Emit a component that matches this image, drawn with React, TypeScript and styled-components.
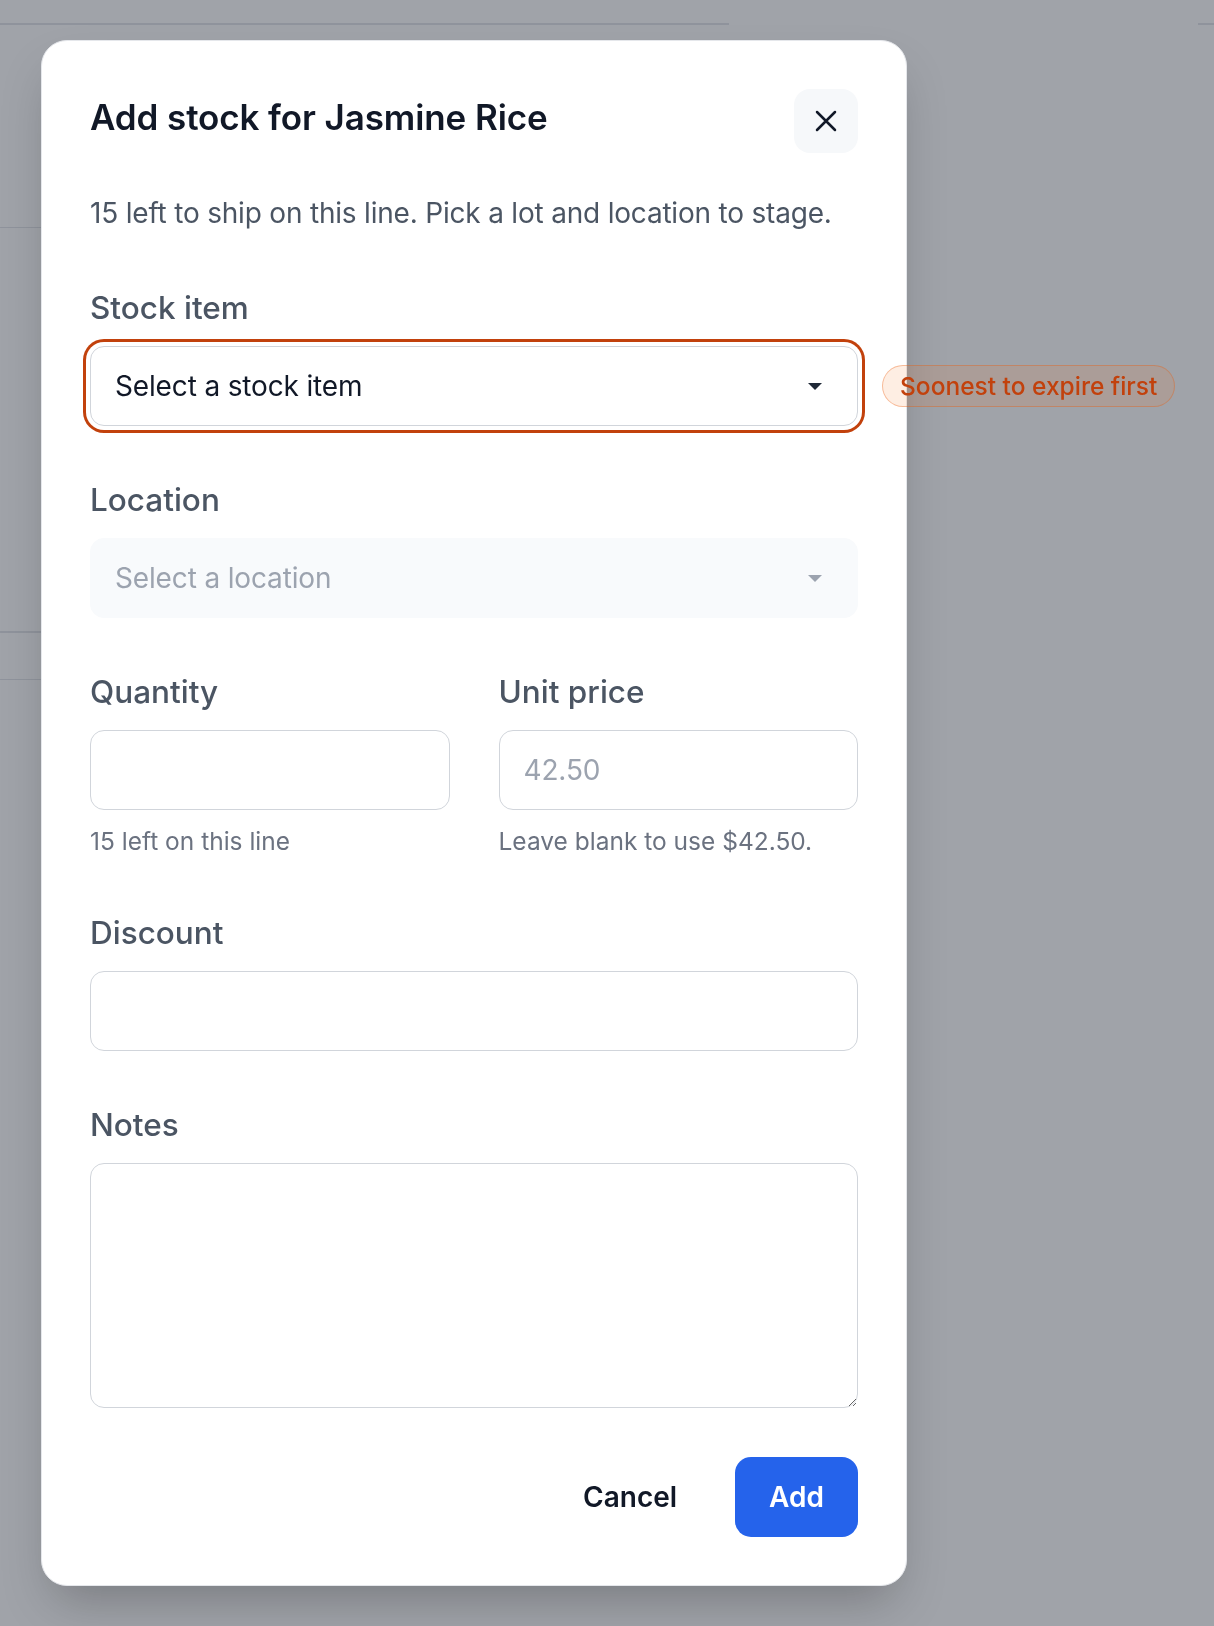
import React from "react";
import styled, { createGlobalStyle } from "styled-components";

const GlobalStyle = createGlobalStyle`
  *, *::before, *::after { box-sizing: border-box; }
  html, body { margin: 0; padding: 0; }
  body {
    font-family: Inter, "Noto Sans", "Liberation Sans", sans-serif;
    background: #ffffff;
    color: #111827;
    -webkit-font-smoothing: antialiased;
  }
`;

/* ---------- page behind the dialog ---------- */

const PageBehind = styled.div`
  min-height: 1626px;
  padding-top: 23px;
  display: flex;
  flex-direction: column;
`;

const RuleRow = styled.div`
  display: flex;
  justify-content: space-between;
`;

const Rule = styled.div<{ $w: number; $t?: number; $mt?: number }>`
  width: ${(p) => p.$w}px;
  height: ${(p) => p.$t ?? 1}px;
  margin-top: ${(p) => p.$mt ?? 0}px;
  background: #e3e5e9;
`;

/* ---------- overlay + dialog ---------- */

const Overlay = styled.div`
  position: fixed;
  inset: 0;
  background: rgba(17, 24, 39, 0.4);
  padding: 40px 0 0 41px;
  display: flex;
  align-items: flex-start;
`;

const Dialog = styled.div`
  position: relative;
  width: 866px;
  background: #ffffff;
  border: 1px solid #e5e7eb;
  border-radius: 26px;
  padding: 48px;
  box-shadow: 0 25px 50px -12px rgba(0, 0, 0, 0.25);
  display: flex;
  flex-direction: column;
`;

const Header = styled.div`
  display: flex;
  justify-content: space-between;
  align-items: flex-start;
`;

const Title = styled.h2`
  margin: 0;
  font-size: 35px;
  line-height: 56px;
  font-weight: 600;
  color: #111827;
  letter-spacing: -0.1px;
`;

const CloseButton = styled.button`
  width: 64px;
  height: 64px;
  padding: 0;
  border: none;
  border-radius: 16px;
  background: #f6f8fa;
  display: flex;
  align-items: center;
  justify-content: center;
  cursor: pointer;
`;

const Subtitle = styled.p`
  margin: 39px 0 0;
  font-size: 28px;
  line-height: 42px;
  color: #4b5563;
  letter-spacing: -0.2px;
`;

const Form = styled.div`
  margin-top: 49px;
  display: flex;
  flex-direction: column;
  gap: 49px;
`;

const Field = styled.div`
  display: flex;
  flex-direction: column;
  min-width: 0;
`;

const Label = styled.label`
  font-size: 31.5px;
  line-height: 49px;
  font-weight: 500;
  color: #4b5563;
  margin-bottom: 14px;
`;

const TwoColumns = styled.div`
  display: grid;
  grid-template-columns: 1fr 1fr;
  gap: 49px;
`;

const SelectWrap = styled.div`
  position: relative;
`;

const SelectBox = styled.button<{ $disabled?: boolean; $highlight?: boolean }>`
  width: 100%;
  height: 80px;
  padding: 0 24px;
  display: flex;
  align-items: center;
  justify-content: space-between;
  font-family: inherit;
  font-size: 28px;
  line-height: 42px;
  letter-spacing: -0.15px;
  text-align: left;
  border-radius: 14px;
  border: 1px solid ${(p) => (p.$disabled ? "#f8fafc" : "#d1d5db")};
  background: ${(p) => (p.$disabled ? "#f8fafc" : "#ffffff")};
  color: ${(p) => (p.$disabled ? "#9ca3af" : "#111827")};
  box-shadow: ${(p) =>
    p.$highlight ? "0 0 0 4px #ffffff, 0 0 0 7px #c2410c" : "none"};
  cursor: ${(p) => (p.$disabled ? "default" : "pointer")};
`;

const Caret = styled.svg`
  flex: none;
  margin-right: 11px;
`;

const Badge = styled.span`
  position: absolute;
  left: calc(100% + 24px);
  top: 50%;
  transform: translateY(-50%);
  height: 42px;
  padding: 0 17px;
  display: inline-flex;
  align-items: center;
  white-space: nowrap;
  border-radius: 999px;
  border: 1px solid rgba(234, 88, 12, 0.35);
  background: rgba(249, 115, 22, 0.12);
  color: #c2410c;
  font-size: 24.5px;
  font-weight: 500;
`;

const TextInput = styled.input`
  width: 100%;
  height: 80px;
  padding: 0 24px;
  font-family: inherit;
  font-size: 28px;
  letter-spacing: -0.15px;
  color: #111827;
  border: 1px solid #d1d5db;
  border-radius: 14px;
  background: #ffffff;
  outline: none;
  &::placeholder {
    color: #9ca3af;
  }
`;

const TextArea = styled.textarea`
  width: 100%;
  height: 245px;
  padding: 17px 24px;
  font-family: inherit;
  font-size: 28px;
  line-height: 42px;
  color: #111827;
  border: 1px solid #d1d5db;
  border-radius: 14px;
  background: #ffffff;
  outline: none;
  resize: vertical;
`;

const Hint = styled.p`
  margin: 14px 0 0;
  font-size: 24.5px;
  line-height: 35px;
  color: #6b7280;
`;

const Footer = styled.div`
  margin-top: 49px;
  display: flex;
  justify-content: flex-end;
  gap: 24px;
`;

const Button = styled.button<{ $primary?: boolean }>`
  height: 80px;
  padding: 0 34px;
  border: none;
  border-radius: 16px;
  font-family: inherit;
  font-size: 28px;
  font-weight: 600;
  background: ${(p) => (p.$primary ? "#2563eb" : "transparent")};
  color: ${(p) => (p.$primary ? "#ffffff" : "#111827")};
  cursor: pointer;
`;

const CaretIcon = ({ color }: { color: string }) => (
  <Caret width="14" height="7" viewBox="0 0 14 7" aria-hidden="true">
    <path d="M0 0 L14 0 L7 7 Z" fill={color} />
  </Caret>
);

const XIcon = () => (
  <svg width="22" height="22" viewBox="0 0 22 22" aria-hidden="true">
    <path
      d="M2 2 L20 20 M20 2 L2 20"
      stroke="#111827"
      strokeWidth="2.5"
      strokeLinecap="round"
      fill="none"
    />
  </svg>
);

export default function App() {
  return (
    <>
      <GlobalStyle />
      <PageBehind>
        <RuleRow>
          <Rule $w={729} $t={2} />
          <Rule $w={16} $t={2} />
        </RuleRow>
        <Rule $w={700} $mt={202} />
        <Rule $w={700} $t={2} $mt={403} />
        <Rule $w={700} $mt={46} />
      </PageBehind>

      <Overlay>
        <Dialog role="dialog" aria-labelledby="dlg-title">
          <Header>
            <Title id="dlg-title">Add stock for Jasmine Rice</Title>
            <CloseButton aria-label="Close">
              <XIcon />
            </CloseButton>
          </Header>
          <Subtitle>
            15 left to ship on this line. Pick a lot and location to stage.
          </Subtitle>

          <Form>
            <Field>
              <Label>Stock item</Label>
              <SelectWrap>
                <SelectBox $highlight>
                  <span>Select a stock item</span>
                  <CaretIcon color="#1f2937" />
                </SelectBox>
                <Badge>Soonest to expire first</Badge>
              </SelectWrap>
            </Field>

            <Field>
              <Label>Location</Label>
              <SelectBox $disabled>
                <span>Select a location</span>
                <CaretIcon color="#9ca3af" />
              </SelectBox>
            </Field>

            <TwoColumns>
              <Field>
                <Label>Quantity</Label>
                <TextInput type="text" />
                <Hint>15 left on this line</Hint>
              </Field>
              <Field>
                <Label>Unit price</Label>
                <TextInput type="text" placeholder="42.50" />
                <Hint>Leave blank to use $42.50.</Hint>
              </Field>
            </TwoColumns>

            <Field>
              <Label>Discount</Label>
              <TextInput type="text" />
            </Field>

            <Field>
              <Label>Notes</Label>
              <TextArea />
            </Field>
          </Form>

          <Footer>
            <Button>Cancel</Button>
            <Button $primary>Add</Button>
          </Footer>
        </Dialog>
      </Overlay>
    </>
  );
}
